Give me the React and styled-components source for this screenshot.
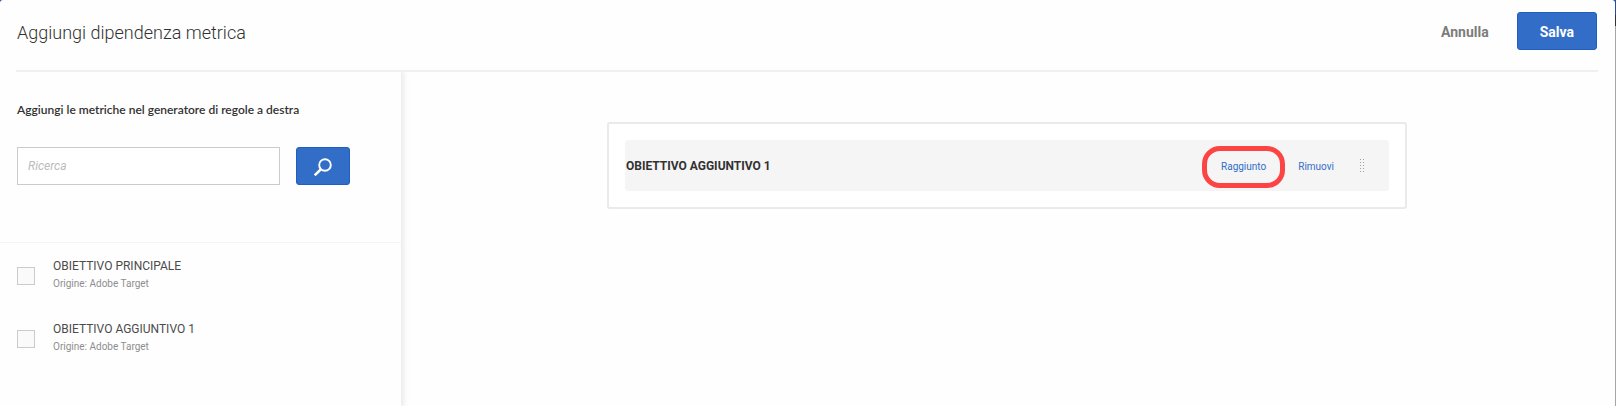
import React from "react";
import styled, { createGlobalStyle } from "styled-components";

const GlobalStyle = createGlobalStyle`
  *, *::before, *::after { box-sizing: border-box; }
  body {
    margin: 0;
    font-family: Roboto, "Noto Sans", sans-serif;
    color: #323232;
    background: linear-gradient(#2450a0 0 15px, #323232 15px 26px, #a6a6a6 26px);
    background-repeat: no-repeat;
    background-attachment: fixed;
  }
  button, input { font-family: inherit; }
`;

const Dialog = styled.div`
  display: flex;
  flex-direction: column;
  min-height: 100vh;
  margin-right: 1px;
  background: #fefefe;
  border-radius: 3px 3px 0 0;
`;

const Header = styled.header`
  display: flex;
  align-items: center;
  justify-content: space-between;
  height: 72px;
  margin: 0 17px 0 16px;
  padding: 0 1px 8px;
  border-bottom: 2px solid #f0f0f0;
`;

const Title = styled.h1`
  margin: 0;
  padding-top: 4px;
  font-size: 18px;
  line-height: 28px;
  font-weight: 300;
`;

const Actions = styled.div`
  display: flex;
  align-items: center;
  gap: 4px;
`;

const Button = styled.button`
  height: 38px;
  padding: 2px ${(p) => (p.$quiet ? 23 : 22)}px 0;
  border: 1px solid ${(p) => (p.$quiet ? "transparent" : "#1f5fc0")};
  border-radius: 3px;
  background: ${(p) => (p.$quiet ? "transparent" : "#326ec8")};
  color: ${(p) => (p.$quiet ? "#7c7c7c" : "#fff")};
  font-size: 14px;
  line-height: 20px;
  font-weight: 700;
`;

const SearchButton = styled(Button)`
  display: flex;
  align-items: center;
  justify-content: center;
  width: 54px;
  padding: 2px 0 0;
`;

const Body = styled.div`
  display: flex;
  flex: 1;
`;

const Sidebar = styled.aside`
  flex: 0 0 401px;
  box-shadow: 1px 0 6px 1px #e6e6e6;
  clip-path: inset(0 -12px 0 0);
`;

const Search = styled.form`
  padding: 28px 17px 57px;
  border-bottom: 1px solid #f4f4f4;
`;

const Hint = styled.h2`
  margin: 0 0 27px;
  font-family: Lato, sans-serif;
  font-size: 12px;
  line-height: 20px;
  font-weight: 600;
`;

const SearchRow = styled.div`
  display: flex;
  gap: 16px;
`;

const SearchInput = styled.input`
  width: 263px;
  height: 38px;
  padding: 0 10px;
  border: 1px solid #cbcbcb;
  background: #fff;
  font-size: 12px;
  line-height: 20px;
  &::placeholder { color: #bcbcbc; font-style: italic; opacity: 1; }
`;

const MetricList = styled.ul`
  display: grid;
  gap: 27px;
  margin: 0;
  padding: 14px 17px;
  list-style: none;
`;

const Metric = styled.label`
  display: flex;
  align-items: flex-start;
  gap: 18px;
`;

const Checkbox = styled.input`
  appearance: none;
  width: 18px;
  height: 18px;
  margin: 10px 0 0;
  border: 1px solid #cbcbcb;
  background: #fafafa;
`;

const MetricName = styled.span`
  display: block;
  font-size: 12px;
  line-height: 18px;
  color: #4b4b4b;
`;

const MetricSource = styled.span`
  display: block;
  font-size: 10px;
  line-height: 18px;
  color: #8e8e8e;
`;

const Builder = styled.main`
  flex: 1;
  padding: 50px 2px 0 0;
`;

const RuleGroup = styled.section`
  max-width: 800px;
  margin: 0 auto;
  padding: 16px;
  border: 2px solid #eaeaea;
  border-radius: 3px;
  background: #fff;
`;

const Rule = styled.div`
  display: flex;
  align-items: center;
  height: 51px;
  padding: 0 24px 0 1px;
  border-radius: 3px;
  background: #f5f5f5;
`;

const RuleName = styled.h3`
  flex: 1;
  margin: 0;
  font-size: 12px;
  line-height: 20px;
  font-weight: 700;
`;

const RuleAction = styled.button`
  position: relative;
  padding: 2px 0 0;
  margin-left: 32px;
  border: 0;
  background: none;
  color: #326ec8;
  font-size: 10px;
  line-height: 16px;
`;

const Highlight = styled.span`
  position: absolute;
  inset: -11px -19px -13px;
  border: 5px solid #fc4444;
  border-radius: 18px;
  pointer-events: none;
`;

const Grip = styled.svg`
  display: block;
  margin-left: 26px;
`;

const metrics = ["OBIETTIVO PRINCIPALE", "OBIETTIVO AGGIUNTIVO 1"];

export default function App() {
  return (
    <>
      <GlobalStyle />
      <Dialog>
        <Header>
          <Title>Aggiungi dipendenza metrica</Title>
          <Actions>
            <Button type="button" $quiet>Annulla</Button>
            <Button type="button">Salva</Button>
          </Actions>
        </Header>
        <Body>
          <Sidebar>
            <Search onSubmit={(e) => e.preventDefault()}>
              <Hint>Aggiungi le metriche nel generatore di regole a destra</Hint>
              <SearchRow>
                <SearchInput type="search" placeholder="Ricerca" aria-label="Ricerca" />
                <SearchButton type="submit" aria-label="Ricerca">
                  <svg width="18" height="18" viewBox="0 0 18 18" fill="none" stroke="#fff">
                    <circle cx="11" cy="7" r="5.8" strokeWidth="1.9" />
                    <path d="M7.2 11 .7 17.3" strokeWidth="2.5" />
                  </svg>
                </SearchButton>
              </SearchRow>
            </Search>
            <MetricList>
              {metrics.map((name) => (
                <li key={name}>
                  <Metric>
                    <Checkbox type="checkbox" />
                    <span>
                      <MetricName>{name}</MetricName>
                      <MetricSource>Origine: Adobe Target</MetricSource>
                    </span>
                  </Metric>
                </li>
              ))}
            </MetricList>
          </Sidebar>
          <Builder>
            <RuleGroup>
              <Rule>
                <RuleName>OBIETTIVO AGGIUNTIVO 1</RuleName>
                <RuleAction type="button">
                  Raggiunto
                  <Highlight />
                </RuleAction>
                <RuleAction type="button">Rimuovi</RuleAction>
                <Grip width="5" height="14" viewBox="0 0 5 14" fill="#a0a0a0" aria-hidden="true">
                  {[0, 3, 6, 9, 12].map((y) => (
                    <React.Fragment key={y}>
                      <rect x="0" y={y} width="1" height="1" />
                      <rect x="3" y={y} width="1" height="1" />
                    </React.Fragment>
                  ))}
                </Grip>
              </Rule>
            </RuleGroup>
          </Builder>
        </Body>
      </Dialog>
    </>
  );
}
